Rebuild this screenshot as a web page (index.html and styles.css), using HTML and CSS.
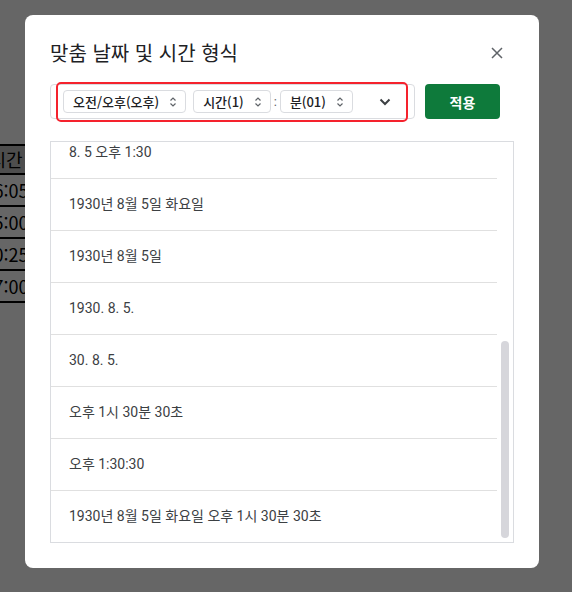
FILE: index.html
```html
<!DOCTYPE html>
<html lang="ko">
<head>
    <meta charset="UTF-8">
    <meta name="viewport" content="width=device-width, initial-scale=1.0">
    <title>맞춤 날짜 및 시간 형식</title>
    <link rel="stylesheet" href="styles.css">
</head>
<body>
    <!-- 뒤에 깔린 시트 -->
    <div class="sheet">
        <div class="col">
            <div class="cell head">시간</div>
            <div class="cell">16:05</div>
            <div class="cell">15:00</div>
            <div class="cell">10:25</div>
            <div class="cell">17:00</div>
        </div>
    </div>

    <div class="dim">
        <div class="dialog">
            <div class="dialog_top">
                <h2 class="title">맞춤 날짜 및 시간 형식</h2>
                <button class="closeBtn" aria-label="닫기">
                    <svg width="12" height="12" viewBox="0 0 12 12"><path d="M1 1 L11 11 M11 1 L1 11" stroke="#5f6368" stroke-width="1.5" fill="none"/></svg>
                </button>
            </div>

            <div class="format_row">
                <div class="format_box">
                    <span class="chip">오전/오후(오후)
                        <svg width="8" height="12" viewBox="0 0 8 12"><path d="M1.5 4.5 L4 2 L6.5 4.5 M1.5 7.5 L4 10 L6.5 7.5" stroke="#5f6368" stroke-width="1.2" fill="none"/></svg>
                    </span>
                    <span class="chip">시간(1)
                        <svg width="8" height="12" viewBox="0 0 8 12"><path d="M1.5 4.5 L4 2 L6.5 4.5 M1.5 7.5 L4 10 L6.5 7.5" stroke="#5f6368" stroke-width="1.2" fill="none"/></svg>
                    </span>
                    <span class="colon">:</span>
                    <span class="chip">분(01)
                        <svg width="8" height="12" viewBox="0 0 8 12"><path d="M1.5 4.5 L4 2 L6.5 4.5 M1.5 7.5 L4 10 L6.5 7.5" stroke="#5f6368" stroke-width="1.2" fill="none"/></svg>
                    </span>
                    <button class="moreBtn" aria-label="더보기">
                        <svg width="12" height="8" viewBox="0 0 12 8"><path d="M1.5 1.5 L6 6 L10.5 1.5" stroke="#3c4043" stroke-width="2" fill="none"/></svg>
                    </button>
                    <div class="mark"></div>
                </div>
                <button class="applyBtn">적용</button>
            </div>

            <div class="list_wrap">
                <ul class="format_list">
                    <li>1930. 8. 5. 오후 1:30:30</li>
                    <li>1930. 8. 5. 화 오후 1:30:30</li>
                    <li>1930. 8. 5. 오후 1:30</li>
                    <li>오후 1:30</li>
                    <li>13:30:30</li>
                    <li>8. 5.</li>
                    <li>8. 5. 화</li>
                    <li>8. 5 오후 1:30</li>
                    <li>1930년 8월 5일 화요일</li>
                    <li>1930년 8월 5일</li>
                    <li>1930. 8. 5.</li>
                    <li>30. 8. 5.</li>
                    <li>오후 1시 30분 30초</li>
                    <li>오후 1:30:30</li>
                    <li>1930년 8월 5일 화요일 오후 1시 30분 30초</li>
                </ul>
                <div class="thumb"></div>
            </div>
        </div>
    </div>

    <script>
        // 목록을 맨 아래까지 스크롤 + 스크롤바 막대 위치 계산
        const list = document.querySelector(".format_list");
        const thumb = document.querySelector(".thumb");
        list.scrollTop = list.scrollHeight;

        const track = list.clientHeight;
        const thumbH = Math.round(track * track / list.scrollHeight);
        const thumbTop = Math.round((track - thumbH) * list.scrollTop / (list.scrollHeight - track));
        thumb.style.height = (thumbH - 8) + "px";
        thumb.style.top = (thumbTop + 4) + "px";
    </script>
</body>
</html>
```

FILE: styles.css
```css
*{ margin: 0; padding: 0; box-sizing: border-box;}
ol,ul,li{ list-style: none;}
button{ font-family: inherit; cursor: pointer;}

body{ width: 572px; height: 592px; overflow: hidden; background-color: #fff; font-family: Roboto, "Noto Sans CJK KR", sans-serif; color: #3c4043;}

/* 시트 */
.sheet{ padding-top: 144px;}
.sheet .col{ width: 80px; margin-left: -34px;}
.sheet .cell{ height: 32px; border-bottom: 2px solid #000; font-size: 18px; line-height: 30px; text-align: center; color: #000; font-family: "Noto Sans CJK KR", sans-serif;}
.sheet .cell.head{ height: 31px; background-color: #c4c4c4; border-top: 2px solid #000; line-height: 27px;}

/* 팝업 */
.dim{ position: fixed; top: 0; left: 0; right: 0; bottom: 0; background-color: rgba(0,0,0,.6); padding: 15px 0 0 25px;}
.dialog{ width: 514px; height: 553px; background-color: #fff; border-radius: 8px; padding: 24px 25px 0 25px;}

.dialog_top{ display: flex; justify-content: space-between; align-items: center; height: 28px;}
.dialog_top .title{ font-size: 20px; font-weight: 400; line-height: 28px; color: #202124; font-family: "Noto Sans CJK KR", sans-serif;}
.dialog_top .closeBtn{ width: 24px; height: 24px; margin-right: 5px; border: none; background: none; display: flex; align-items: center; justify-content: center;}

.format_row{ display: flex; gap: 10px; margin-top: 17px;}
.format_box{ position: relative; width: 365px; height: 35px; border: 1px solid #dadce0; border-radius: 4px; display: flex; align-items: center; padding-left: 12px;}
.format_box .chip{ display: flex; align-items: center; gap: 10px; height: 23px; padding: 0 8px 0 9px; margin-right: 7px; border: 1px solid #dadce0; border-radius: 4px; font-size: 13px; font-weight: 500; color: #202124; font-family: "Noto Sans CJK KR", sans-serif;}
.format_box .chip:nth-of-type(3){ padding-right: 9px;}
.format_box .colon{ margin: 0 3px 0 -4px; font-size: 13px; color: #5f6368;}
.format_box .moreBtn{ width: 20px; height: 20px; margin-left: 15px; border: none; background: none; display: flex; align-items: center; justify-content: center;}
.format_box .mark{ position: absolute; left: 5px; top: -3px; width: 352px; height: 40px; border: 2px solid #f5222d; border-radius: 5px;}

.applyBtn{ width: 75px; height: 35px; border: none; border-radius: 4px; background-color: #0e7a3b; color: #fff; font-size: 14px; font-weight: 700;}

.list_wrap{ position: relative; width: 464px; height: 402px; margin-top: 22px; padding-right: 16px; border: 1px solid #dadce0;}
.format_list{ height: 400px; overflow-y: scroll; scrollbar-width: none;}
.format_list::-webkit-scrollbar{ display: none;}
.format_list li{ height: 52px; line-height: 51px; padding-left: 18px; border-bottom: 1px solid #e0e0e0; font-size: 14px; color: #3c4043;}
.format_list li:last-child{ height: 51px; line-height: 51px; border-bottom: none;}
.list_wrap .thumb{ position: absolute; right: 4px; top: 200px; width: 8px; height: 196px; border-radius: 4px; background-color: #d6d6db;}
```
